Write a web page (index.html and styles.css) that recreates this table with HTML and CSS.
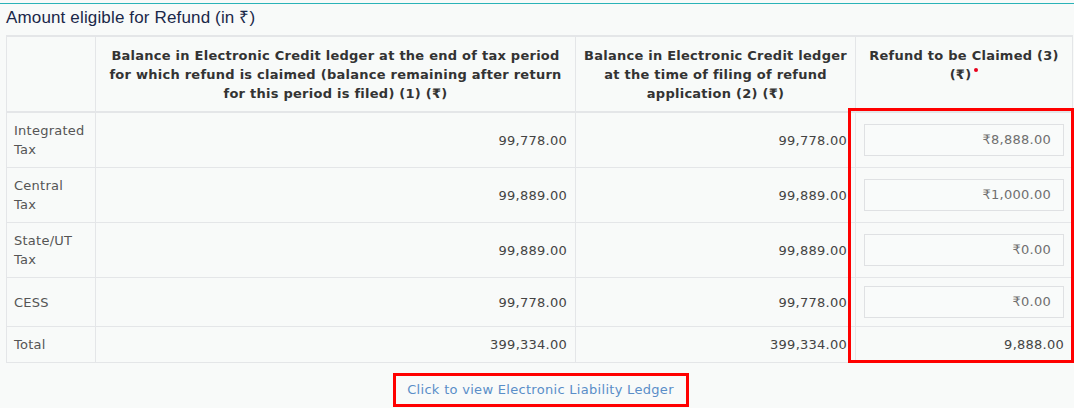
FILE: index.html
```html
<!DOCTYPE html>
<html>
<head>
<meta charset="utf-8">
<link rel="stylesheet" href="styles.css">
</head>
<body>
<div class="page">
  <h3 class="title">Amount eligible for Refund (in ₹)</h3>
  <div class="table-wrap">
    <table class="refund">
      <colgroup>
        <col class="c1"><col class="c2"><col class="c3"><col class="c4">
      </colgroup>
      <thead>
        <tr>
          <th></th>
          <th>Balance in Electronic Credit ledger at the end of tax period for which refund is claimed (balance remaining after return for this period is filed) (1) (₹)</th>
          <th>Balance in Electronic Credit ledger at the time of filing of refund application (2) (₹)</th>
          <th>Refund to be Claimed (3) (₹)<span class="req"></span></th>
        </tr>
      </thead>
      <tbody>
        <tr>
          <td class="lbl">Integrated<br>Tax</td>
          <td class="num">99,778.00</td>
          <td class="num">99,778.00</td>
          <td><div class="inp">₹8,888.00</div></td>
        </tr>
        <tr>
          <td class="lbl">Central<br>Tax</td>
          <td class="num">99,889.00</td>
          <td class="num">99,889.00</td>
          <td><div class="inp">₹1,000.00</div></td>
        </tr>
        <tr>
          <td class="lbl">State/UT<br>Tax</td>
          <td class="num">99,889.00</td>
          <td class="num">99,889.00</td>
          <td><div class="inp">₹0.00</div></td>
        </tr>
        <tr>
          <td class="lbl">CESS</td>
          <td class="num">99,778.00</td>
          <td class="num">99,778.00</td>
          <td><div class="inp">₹0.00</div></td>
        </tr>
        <tr>
          <td class="lbl">Total</td>
          <td class="num">399,334.00</td>
          <td class="num">399,334.00</td>
          <td class="num">9,888.00</td>
        </tr>
      </tbody>
    </table>
    <div class="highlight"></div>
  </div>
  <div class="link-row">
    <a class="ledger-link" href="#">Click to view Electronic Liability Ledger</a>
  </div>
</div>
</body>
</html>
```

FILE: styles.css
```css
html, body {
  margin: 0;
  padding: 0;
  background: #f8faf9;
}
.page {
  border-top: 1px solid #2ab3b8;
  margin-top: 3px;
  padding: 0 0 0 6px;
  height: 404px;
  overflow: hidden;
}
.title {
  margin: 0;
  padding: 4px 0 0 0;
  height: 27px;
  font-family: "Liberation Sans", Arial, sans-serif;
  font-weight: normal;
  font-size: 17px;
  letter-spacing: 0.15px;
  line-height: 20px;
  color: #1a2849;
}
.table-wrap {
  position: relative;
  width: 1068px;
}
.refund {
  border-collapse: collapse;
  width: 1066px;
  table-layout: fixed;
  font-family: "DejaVu Sans", Verdana, sans-serif;
  font-size: 13px;
  letter-spacing: 0.25px;
  color: #444;
}
.c1 { width: 89px; }
.c2 { width: 480px; }
.c3 { width: 280px; }
.c4 { width: 217px; }
.refund th, .refund td {
  border: 1px solid #e4e6e8;
  padding: 8px 8px;
  line-height: 19px;
}
.refund th {
  font-weight: bold;
  color: #333;
  text-align: center;
  vertical-align: top;
  padding-top: 9px;
  border-top: 2px solid #e4e6e8;
  border-bottom: 2px solid #e4e6e8;
  height: 57px;
}
.refund td {
  vertical-align: middle;
}
.refund td.lbl {
  color: #555;
  text-align: left;
  padding-left: 7px;
}
.refund td.num {
  text-align: right;
  color: #444;
}
.req {
  display: inline-block;
  width: 4px;
  height: 4px;
  border-radius: 50%;
  background: #e8001c;
  margin-left: 3px;
  vertical-align: 7px;
}
.inp {
  box-sizing: border-box;
  height: 32px;
  border: 1px solid #dfe1e3;
  background: #f9fbfa;
  text-align: right;
  padding: 0 12px;
  line-height: 30px;
  color: #6f6f6f;
}
.highlight {
  position: absolute;
  left: 842px;
  top: 73px;
  width: 220px;
  height: 249px;
  border: 3px solid #f00;
}
.link-row {
  text-align: center;
  width: 1066px;
  padding-top: 10px;
  margin-left: 2px;
}
.ledger-link {
  display: inline-block;
  border: 3px solid #f00;
  padding: 4px 12px 4px 11px;
  font-family: "DejaVu Sans", Verdana, sans-serif;
  font-size: 13px;
  letter-spacing: 0.3px;
  line-height: 20px;
  color: #5a8ec8;
  text-decoration: none;
}
```
